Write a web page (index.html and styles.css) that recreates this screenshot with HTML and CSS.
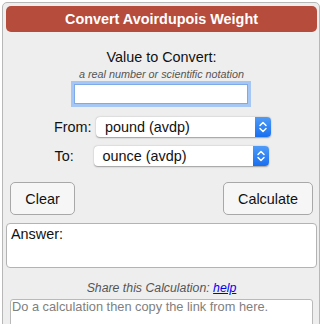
FILE: index.html
```html
<!DOCTYPE html>
<html>
<head>
<meta charset="utf-8">
<title>Convert Avoirdupois Weight</title>
<link rel="stylesheet" href="styles.css">
</head>
<body>
<div class="panel">
  <div class="header">Convert Avoirdupois Weight</div>
  <div class="title">Value to Convert:</div>
  <div class="hint">a real number or scientific notation</div>
  <div class="input-row"><input class="value" type="text"></div>
  <div class="sel-row">
    <span class="label from">From:</span>
    <div class="select">
      <span class="sel-text">pound (avdp)</span>
      <span class="arrow"><svg width="16" height="20" viewBox="0 0 16 20"><path d="M5 8.5 L8 5.5 L11 8.5" fill="none" stroke="#fff" stroke-width="1.5" stroke-linecap="round" stroke-linejoin="round"/><path d="M5 11.5 L8 14.5 L11 11.5" fill="none" stroke="#fff" stroke-width="1.5" stroke-linecap="round" stroke-linejoin="round"/></svg></span>
    </div>
  </div>
  <div class="sel-row to-row">
    <span class="label to">To:</span>
    <div class="select">
      <span class="sel-text">ounce (avdp)</span>
      <span class="arrow"><svg width="16" height="20" viewBox="0 0 16 20"><path d="M5 8.5 L8 5.5 L11 8.5" fill="none" stroke="#fff" stroke-width="1.5" stroke-linecap="round" stroke-linejoin="round"/><path d="M5 11.5 L8 14.5 L11 11.5" fill="none" stroke="#fff" stroke-width="1.5" stroke-linecap="round" stroke-linejoin="round"/></svg></span>
    </div>
  </div>
  <div class="buttons">
    <button class="btn clear">Clear</button>
    <button class="btn calc">Calculate</button>
  </div>
  <div class="answer">Answer:</div>
  <div class="share">Share this Calculation: <a href="#" class="help">help</a></div>
  <textarea class="link" placeholder="Do a calculation then copy the link from here."></textarea>
</div>
</body>
</html>
```
FILE: styles.css
```css
html, body {
  margin: 0;
  padding: 0;
  overflow: hidden;
  background: #ffffff;
}
body {
  font-family: "Liberation Sans", Arial, sans-serif;
  font-size: 14.4px;
  color: #111;
}
.panel {
  margin: 2px 0 0 2px;
  width: 311px;
  height: 330px;
  border: 1px solid #b7b7b7;
  border-radius: 5px;
  background: #eeeeee;
  padding: 3px 2px 0 3px;
}
.header {
  height: 25px;
  padding-top: 1px;
  line-height: 25px;
  background: #b64c3b;
  border-radius: 5px;
  color: #fff;
  font-weight: bold;
  text-align: center;
  font-size: 14.4px;
}
.title {
  margin-top: 16px;
  line-height: 18px;
  text-align: center;
}
.hint {
  margin-top: 2px;
  line-height: 13px;
  font-size: 10.8px;
  font-style: italic;
  color: #555;
  text-align: center;
}
.input-row {
  margin-top: 3px;
  display: flex;
  justify-content: center;
  padding-right: 1px;
}
.value {
  box-sizing: border-box;
  width: 174px;
  height: 20px;
  margin: 0;
  border: 1px solid #7eaaea;
  box-shadow: 0 0 0 3px #a6c7f3;
  background: #fff;
  outline: none;
  padding: 0 3px;
  font: inherit;
}
.sel-row {
  margin-top: 13px;
  display: flex;
  justify-content: center;
  align-items: center;
  height: 20px;
  padding-left: 2px;
}
.to-row {
  margin-top: 9px;
  padding-left: 0;
}
.label {
  line-height: 20px;
}
.from {
  width: 42px;
}
.to {
  width: 39px;
}
.select {
  box-sizing: border-box;
  width: 175px;
  height: 20px;
  display: flex;
  border-radius: 4px;
  box-shadow: 0 0.5px 1.5px rgba(0,0,0,0.35);
  background: #fff;
}
.sel-text {
  flex: 1;
  padding-left: 9px;
  line-height: 20px;
  color: #111;
}
.arrow {
  width: 16px;
  height: 20px;
  border-radius: 0 4px 4px 0;
  background: linear-gradient(#4e9bf7, #1a6ff0);
  display: flex;
}
.buttons {
  margin-top: 16px;
  display: flex;
  justify-content: space-between;
  padding: 0 4px;
}
.btn {
  box-sizing: border-box;
  height: 33px;
  border: 1px solid #a8a8a8;
  border-radius: 5px;
  background: #f6f6f6;
  font: inherit;
  color: #111;
  padding: 0;
  margin: 0;
}
.clear {
  width: 65px;
}
.calc {
  width: 90px;
}
.answer {
  box-sizing: border-box;
  margin-top: 8px;
  height: 45px;
  background: #fff;
  border: 1px solid #b3b3b3;
  border-radius: 4px;
  padding: 1px 4px;
  line-height: 18px;
}
.share {
  margin-top: 13px;
  line-height: 15px;
  font-size: 12.3px;
  font-style: italic;
  color: #555;
  text-align: center;
}
.help {
  color: #0000ee;
  text-decoration: underline;
}
.link {
  display: block;
  box-sizing: border-box;
  margin: 3px 4px 0 4px;
  width: 303px;
  height: 40px;
  border: 1px solid #b9b9b9;
  border-radius: 3px;
  background: #fff;
  padding: 0 1px;
  font-family: "Liberation Sans", Arial, sans-serif;
  font-size: 12.8px;
  line-height: 13px;
  resize: none;
}
.link::placeholder {
  color: #808080;
}
```
